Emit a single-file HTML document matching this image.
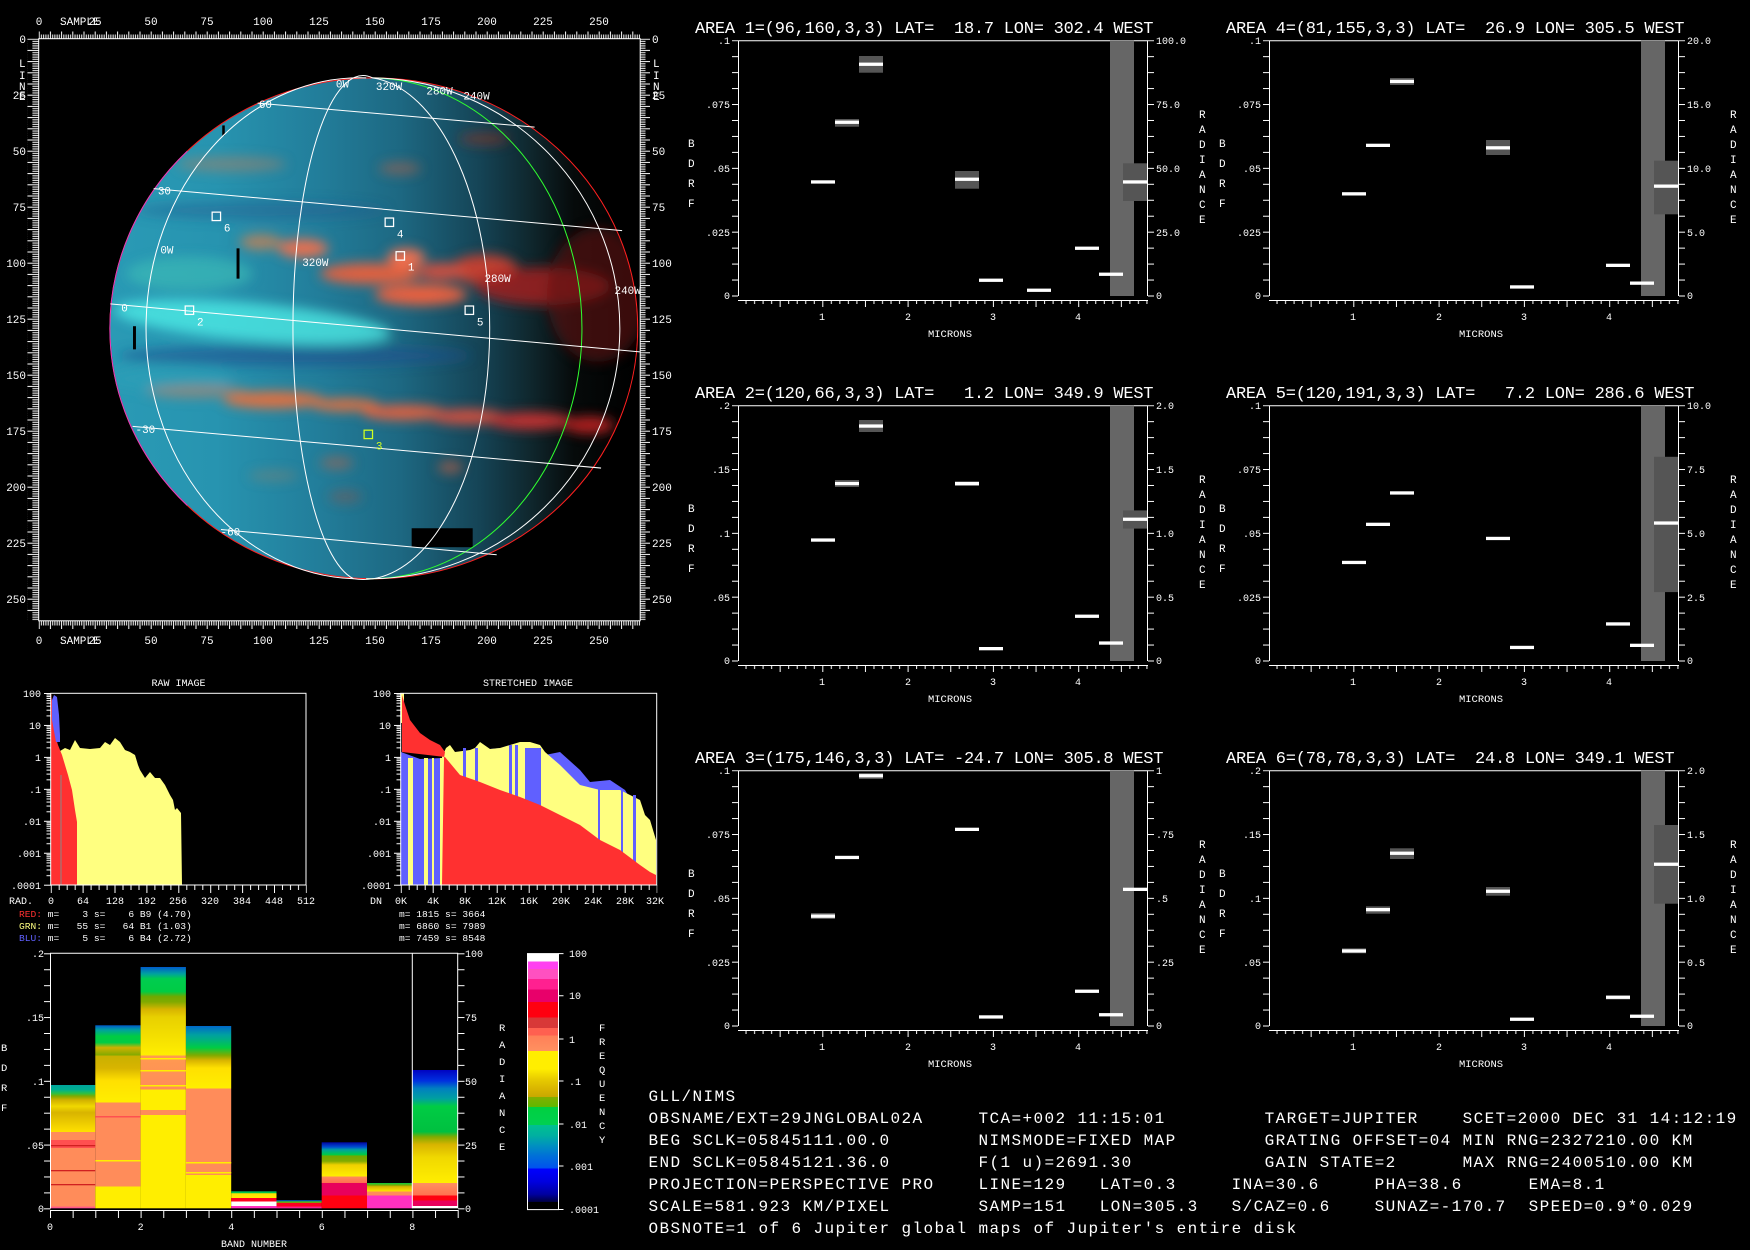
<!DOCTYPE html>
<html><head><meta charset="utf-8"><style>
html,body{margin:0;padding:0;background:#000;}
svg{display:block}
text{font-family:"Liberation Mono",monospace;fill:#fff;white-space:pre}
</style></head><body>
<svg width="1750" height="1250" viewBox="0 0 1750 1250" xmlns="http://www.w3.org/2000/svg">
<defs>
<pattern id="rt" x="38.7" y="31.5" width="11.2" height="7.2" patternUnits="userSpaceOnUse"><rect x="0" y="0" width="1" height="7.2" fill="#fff"/><rect x="2.24" y="3" width="1" height="4.2" fill="#fff"/><rect x="4.48" y="3" width="1" height="4.2" fill="#fff"/><rect x="6.72" y="3" width="1" height="4.2" fill="#fff"/><rect x="8.96" y="3" width="1" height="4.2" fill="#fff"/></pattern>
<pattern id="rb" x="38.7" y="621" width="11.2" height="8" patternUnits="userSpaceOnUse"><rect x="0" y="0" width="1" height="8" fill="#fff"/><rect x="2.24" y="0" width="1" height="4.5" fill="#fff"/><rect x="4.48" y="0" width="1" height="4.5" fill="#fff"/><rect x="6.72" y="0" width="1" height="4.5" fill="#fff"/><rect x="8.96" y="0" width="1" height="4.5" fill="#fff"/></pattern>
<pattern id="rl" x="27.4" y="38.7" width="11.3" height="11.2" patternUnits="userSpaceOnUse"><rect x="0" y="0" width="11.3" height="1" fill="#fff"/><rect x="5" y="2.24" width="6.3" height="1" fill="#fff"/><rect x="5" y="4.48" width="6.3" height="1" fill="#fff"/><rect x="5" y="6.72" width="6.3" height="1" fill="#fff"/><rect x="5" y="8.96" width="6.3" height="1" fill="#fff"/></pattern>
<pattern id="rr" x="640" y="38.7" width="10" height="11.2" patternUnits="userSpaceOnUse"><rect x="0" y="0" width="10" height="1" fill="#fff"/><rect x="0" y="2.24" width="5.5" height="1" fill="#fff"/><rect x="0" y="4.48" width="5.5" height="1" fill="#fff"/><rect x="0" y="6.72" width="5.5" height="1" fill="#fff"/><rect x="0" y="8.96" width="5.5" height="1" fill="#fff"/></pattern>
<pattern id="tl" x="0" y="40.2" width="6" height="15.956" patternUnits="userSpaceOnUse"><rect x="0" y="0" width="6" height="1" fill="#fff"/></pattern>
<pattern id="tb" x="737" y="300" width="42.65" height="7" patternUnits="userSpaceOnUse"><rect x="0" y="0" width="1" height="7" fill="#fff"/><rect x="8.53" y="0" width="1" height="4" fill="#fff"/><rect x="17.06" y="0" width="1" height="4" fill="#fff"/><rect x="25.59" y="0" width="1" height="4" fill="#fff"/><rect x="34.12" y="0" width="1" height="4" fill="#fff"/></pattern>
<pattern id="hl" x="44" y="693" width="7" height="31.95" patternUnits="userSpaceOnUse"><rect x="0" y="0" width="7" height="1" fill="#fff"/><rect x="2.5" y="1.46" width="4.5" height="1" fill="#fff"/><rect x="2.5" y="3.1" width="4.5" height="1" fill="#fff"/><rect x="2.5" y="4.96" width="4.5" height="1" fill="#fff"/><rect x="2.5" y="7.1" width="4.5" height="1" fill="#fff"/><rect x="2.5" y="9.63" width="4.5" height="1" fill="#fff"/><rect x="2.5" y="12.7" width="4.5" height="1" fill="#fff"/><rect x="2.5" y="16.7" width="4.5" height="1" fill="#fff"/><rect x="2.5" y="22.4" width="4.5" height="1" fill="#fff"/></pattern>
<pattern id="hb" x="50.7" y="885" width="31.9" height="8" patternUnits="userSpaceOnUse"><rect x="0" y="0" width="1" height="8" fill="#fff"/><rect x="8" y="0" width="1" height="5" fill="#fff"/><rect x="16" y="0" width="1" height="5" fill="#fff"/><rect x="24" y="0" width="1" height="5" fill="#fff"/></pattern>
<pattern id="hb2" x="400.7" y="885" width="32" height="8" patternUnits="userSpaceOnUse"><rect x="0" y="0" width="1" height="8" fill="#fff"/><rect x="8" y="0" width="1" height="5" fill="#fff"/><rect x="16" y="0" width="1" height="5" fill="#fff"/><rect x="24" y="0" width="1" height="5" fill="#fff"/></pattern>
<pattern id="bl" x="0" y="953.3" width="7" height="15.94" patternUnits="userSpaceOnUse"><rect x="0" y="0" width="7" height="1" fill="#fff"/></pattern>
<pattern id="bb" x="50" y="1210" width="22.65" height="8" patternUnits="userSpaceOnUse"><rect x="0" y="0" width="1" height="8" fill="#fff"/></pattern>

<linearGradient id="pg" gradientUnits="userSpaceOnUse" x1="262" y1="0" x2="1515" y2="0">
<stop offset="0" stop-color="#2a9ab5"/><stop offset=".2" stop-color="#2794b0"/><stop offset=".4" stop-color="#227d9a"/><stop offset=".55" stop-color="#1d6882"/><stop offset=".7" stop-color="#154456"/><stop offset=".8" stop-color="#0f262c"/><stop offset=".88" stop-color="#060a0a"/><stop offset="1" stop-color="#000"/>
</linearGradient>
<clipPath id="pc"><ellipse cx="888" cy="780" rx="626" ry="595"/></clipPath>
<filter id="bl15" x="-50%" y="-50%" width="200%" height="200%"><feGaussianBlur stdDeviation="14"/></filter>

<linearGradient id="g0" gradientUnits="userSpaceOnUse" x1="0" y1="1208.3" x2="0" y2="953.3">
<stop offset="0" stop-color="#ff40a0"/><stop offset=".01" stop-color="#ff8c5a"/><stop offset=".3" stop-color="#ff8c5a"/><stop offset=".3" stop-color="#ffe000"/><stop offset=".375" stop-color="#d8b400"/><stop offset=".4" stop-color="#f0d800"/><stop offset=".425" stop-color="#d0b000"/><stop offset=".44" stop-color="#80aa00"/><stop offset=".45" stop-color="#30c040"/><stop offset=".465" stop-color="#00b090"/><stop offset=".49" stop-color="#00a0a0"/></linearGradient>
<linearGradient id="g1" gradientUnits="userSpaceOnUse" x1="0" y1="1208.3" x2="0" y2="953.3">
<stop offset="0" stop-color="#ffee00"/><stop offset=".085" stop-color="#ffee00"/><stop offset=".085" stop-color="#ff8c5a"/><stop offset=".415" stop-color="#ff8c5a"/><stop offset=".415" stop-color="#ffee00"/><stop offset=".5" stop-color="#ffe000"/><stop offset=".55" stop-color="#d8b400"/><stop offset=".6" stop-color="#c8b000"/><stop offset=".6" stop-color="#80aa00"/><stop offset=".63" stop-color="#d0b000"/><stop offset=".65" stop-color="#00cc44"/><stop offset=".675" stop-color="#00cc44"/><stop offset=".7" stop-color="#00a0a0"/><stop offset=".72" stop-color="#0050d0"/></linearGradient>
<linearGradient id="g2" gradientUnits="userSpaceOnUse" x1="0" y1="1208.3" x2="0" y2="953.3">
<stop offset="0" stop-color="#ffee00"/><stop offset=".365" stop-color="#ffee00"/><stop offset=".365" stop-color="#ff8c5a"/><stop offset=".385" stop-color="#ff8c5a"/><stop offset=".385" stop-color="#ffee00"/><stop offset=".465" stop-color="#ffee00"/><stop offset=".465" stop-color="#ff8c5a"/><stop offset=".6" stop-color="#ff9a50"/><stop offset=".6" stop-color="#ffee00"/><stop offset=".75" stop-color="#e8d000"/><stop offset=".78" stop-color="#d8b400"/><stop offset=".81" stop-color="#80aa00"/><stop offset=".83" stop-color="#70a800"/><stop offset=".85" stop-color="#00cc44"/><stop offset=".9" stop-color="#00cc50"/><stop offset=".92" stop-color="#00a0a0"/><stop offset=".95" stop-color="#0050d0"/></linearGradient>
<linearGradient id="g3" gradientUnits="userSpaceOnUse" x1="0" y1="1208.3" x2="0" y2="953.3">
<stop offset="0" stop-color="#ffee00"/><stop offset=".13" stop-color="#ffee00"/><stop offset=".13" stop-color="#ff8c5a"/><stop offset=".47" stop-color="#ff8c5a"/><stop offset=".47" stop-color="#ffee00"/><stop offset=".55" stop-color="#ffe000"/><stop offset=".58" stop-color="#d8b400"/><stop offset=".6" stop-color="#80aa00"/><stop offset=".63" stop-color="#00cc44"/><stop offset=".66" stop-color="#00b080"/><stop offset=".68" stop-color="#00a0a0"/><stop offset=".72" stop-color="#0060d0"/></linearGradient>
<linearGradient id="g4" gradientUnits="userSpaceOnUse" x1="0" y1="1208.3" x2="0" y2="953.3">
<stop offset="0" stop-color="#ff30c0"/><stop offset=".01" stop-color="#ff30c0"/><stop offset=".01" stop-color="#ffffff"/><stop offset=".027" stop-color="#ffffff"/><stop offset=".027" stop-color="#ff0020"/><stop offset=".04" stop-color="#ff0020"/><stop offset=".04" stop-color="#ffee00"/><stop offset=".058" stop-color="#ffe000"/><stop offset=".06" stop-color="#00cc44"/><stop offset=".075" stop-color="#00a080"/></linearGradient>
<linearGradient id="g5" gradientUnits="userSpaceOnUse" x1="0" y1="1208.3" x2="0" y2="953.3">
<stop offset="0" stop-color="#ff30c0"/><stop offset=".01" stop-color="#ff0020"/><stop offset=".02" stop-color="#ff0020"/><stop offset=".022" stop-color="#80aa00"/><stop offset=".03" stop-color="#00a080"/><stop offset=".03" stop-color="#0000c0"/><stop offset=".04" stop-color="#0000a0"/></linearGradient>
<linearGradient id="g6" gradientUnits="userSpaceOnUse" x1="0" y1="1208.3" x2="0" y2="953.3">
<stop offset="0" stop-color="#ff0010"/><stop offset=".05" stop-color="#ff0010"/><stop offset=".05" stop-color="#e8005c"/><stop offset=".1" stop-color="#e8005c"/><stop offset=".1" stop-color="#ff7050"/><stop offset=".125" stop-color="#ff8c5a"/><stop offset=".125" stop-color="#ffee00"/><stop offset=".17" stop-color="#f0d000"/><stop offset=".185" stop-color="#80aa00"/><stop offset=".205" stop-color="#70a800"/><stop offset=".21" stop-color="#00cc44"/><stop offset=".23" stop-color="#00a0a0"/><stop offset=".24" stop-color="#0050d0"/><stop offset=".26" stop-color="#0000a0"/></linearGradient>
<linearGradient id="g7" gradientUnits="userSpaceOnUse" x1="0" y1="1208.3" x2="0" y2="953.3">
<stop offset="0" stop-color="#ff30c0"/><stop offset=".05" stop-color="#ff30c0"/><stop offset=".05" stop-color="#ff8c5a"/><stop offset=".065" stop-color="#ff8c5a"/><stop offset=".065" stop-color="#ffee00"/><stop offset=".085" stop-color="#d8b400"/><stop offset=".09" stop-color="#80aa00"/><stop offset=".1" stop-color="#00cc44"/></linearGradient>
<linearGradient id="g8" gradientUnits="userSpaceOnUse" x1="0" y1="1208.3" x2="0" y2="953.3">
<stop offset="0" stop-color="#ffffff"/><stop offset=".01" stop-color="#ffffff"/><stop offset=".01" stop-color="#e8005c"/><stop offset=".03" stop-color="#e8005c"/><stop offset=".03" stop-color="#ff0010"/><stop offset=".05" stop-color="#ff0010"/><stop offset=".05" stop-color="#ff7050"/><stop offset=".1" stop-color="#ff9060"/><stop offset=".1" stop-color="#ffee00"/><stop offset=".2" stop-color="#f0d800"/><stop offset=".25" stop-color="#d8b400"/><stop offset=".28" stop-color="#80aa00"/><stop offset=".3" stop-color="#00c040"/><stop offset=".4" stop-color="#00cc44"/><stop offset=".43" stop-color="#00a0a0"/><stop offset=".47" stop-color="#0080c0"/><stop offset=".5" stop-color="#0030e0"/><stop offset=".545" stop-color="#0000c0"/></linearGradient>
<linearGradient id="cb" x1="0" y1="0" x2="0" y2="1">
<stop offset="0" stop-color="#fff"/><stop offset=".03" stop-color="#fff"/><stop offset=".03" stop-color="#ff40f0"/><stop offset=".06" stop-color="#ff40f0"/><stop offset=".06" stop-color="#ff50c0"/><stop offset=".1" stop-color="#ff50c0"/><stop offset=".1" stop-color="#ff2090"/><stop offset=".14" stop-color="#ff2090"/><stop offset=".14" stop-color="#e8006a"/><stop offset=".19" stop-color="#e8006a"/><stop offset=".19" stop-color="#ff0010"/><stop offset=".25" stop-color="#ff0010"/><stop offset=".25" stop-color="#d83838"/><stop offset=".29" stop-color="#d83838"/><stop offset=".29" stop-color="#ff6050"/><stop offset=".32" stop-color="#ff6050"/><stop offset=".32" stop-color="#ff8058"/><stop offset=".38" stop-color="#ff9060"/><stop offset=".38" stop-color="#ffee00"/><stop offset=".45" stop-color="#ffee00"/><stop offset=".49" stop-color="#e8cc00"/><stop offset=".53" stop-color="#d8b400"/><stop offset=".56" stop-color="#c8a800"/><stop offset=".56" stop-color="#80b000"/><stop offset=".6" stop-color="#60b800"/><stop offset=".6" stop-color="#00d040"/><stop offset=".67" stop-color="#00d050"/><stop offset=".67" stop-color="#00c090"/><stop offset=".71" stop-color="#00b0a0"/><stop offset=".75" stop-color="#0090c0"/><stop offset=".79" stop-color="#0070d8"/><stop offset=".84" stop-color="#0050f0"/><stop offset=".84" stop-color="#0000ff"/><stop offset=".89" stop-color="#0000e0"/><stop offset=".94" stop-color="#0000a0"/><stop offset=".97" stop-color="#000040"/><stop offset=".97" stop-color="#000"/><stop offset="1" stop-color="#000"/></linearGradient>

<g id="cf">
<path d="M738.5 296 V40.7 H1147.5 V296" stroke="#fff" fill="none"/>
<path d="M738 300.5 H1148" stroke="#fff"/>
<rect x="732" y="40.2" width="6" height="257" fill="url(#tl)"/>
<rect x="1148" y="40.2" width="6" height="257" fill="url(#tl)"/>
<rect x="745" y="300" width="403.5" height="7" fill="url(#tb)"/>
<rect x="1110" y="40.7" width="24" height="255.3" fill="#666"/>
<text x="688" y="147" font-size="11">B</text><text x="688" y="167" font-size="11">D</text><text x="688" y="187" font-size="11">R</text><text x="688" y="207" font-size="11">F</text>
<text x="1199" y="118" font-size="11">R</text><text x="1199" y="133" font-size="11">A</text><text x="1199" y="148" font-size="11">D</text><text x="1199" y="163" font-size="11">I</text><text x="1199" y="178" font-size="11">A</text><text x="1199" y="193" font-size="11">N</text><text x="1199" y="208" font-size="11">C</text><text x="1199" y="223" font-size="11">E</text>
<text x="822" y="320" font-size="10" text-anchor="middle">1</text><text x="908" y="320" font-size="10" text-anchor="middle">2</text><text x="993" y="320" font-size="10" text-anchor="middle">3</text><text x="1078" y="320" font-size="10" text-anchor="middle">4</text>
<text x="950" y="337" font-size="10.5" text-anchor="middle">MICRONS</text>
</g>
</defs>

<!-- ===== Planet panel ===== -->
<rect x="38.7" y="31.5" width="601.5" height="7.2" fill="url(#rt)"/>
<rect x="38.7" y="621" width="601.5" height="8" fill="url(#rb)"/>
<rect x="27.4" y="38.7" width="11.3" height="582" fill="url(#rl)"/>
<rect x="640" y="38.7" width="10" height="582" fill="url(#rr)"/>
<rect x="38.7" y="38.7" width="601.5" height="582.1" fill="none" stroke="#fff"/>
<g font-size="11" text-anchor="middle">
<text x="39" y="25">0</text><text x="95" y="25">25</text><text x="151" y="25">50</text><text x="207" y="25">75</text><text x="263" y="25">100</text><text x="319" y="25">125</text><text x="375" y="25">150</text><text x="431" y="25">175</text><text x="487" y="25">200</text><text x="543" y="25">225</text><text x="599" y="25">250</text>
<text x="39" y="644">0</text><text x="95" y="644">25</text><text x="151" y="644">50</text><text x="207" y="644">75</text><text x="263" y="644">100</text><text x="319" y="644">125</text><text x="375" y="644">150</text><text x="431" y="644">175</text><text x="487" y="644">200</text><text x="543" y="644">225</text><text x="599" y="644">250</text>
</g>
<text x="60" y="25" font-size="11">SAMPLE</text><text x="60" y="644" font-size="11">SAMPLE</text>
<g font-size="11" text-anchor="end">
<text x="26" y="43">0</text><text x="26" y="99">25</text><text x="26" y="155">50</text><text x="26" y="211">75</text><text x="26" y="267">100</text><text x="26" y="323">125</text><text x="26" y="379">150</text><text x="26" y="435">175</text><text x="26" y="491">200</text><text x="26" y="547">225</text><text x="26" y="603">250</text>
</g>
<g font-size="11">
<text x="19" y="67">L</text><text x="19" y="79">I</text><text x="19" y="90">N</text><text x="19" y="100">E</text>
<text x="653" y="67">L</text><text x="653" y="79">I</text><text x="653" y="90">N</text><text x="653" y="100">E</text>
<text x="652" y="43">0</text><text x="652" y="99">25</text><text x="652" y="155">50</text><text x="652" y="211">75</text><text x="652" y="267">100</text><text x="652" y="323">125</text><text x="652" y="379">150</text><text x="652" y="435">175</text><text x="652" y="491">200</text><text x="652" y="547">225</text><text x="652" y="603">250</text>
</g>

<svg x="0" y="0" width="660" height="660" viewBox="0 0 1568 1568">
<ellipse cx="888" cy="780" rx="626" ry="595" fill="url(#pg)"/>
<g clip-path="url(#pc)"><g filter="url(#bl15)">
<ellipse cx="600" cy="765" rx="330" ry="45" fill="#50f0e8" opacity=".75" transform="rotate(5 600 765)"/>
<ellipse cx="450" cy="650" rx="150" ry="40" fill="#40c8b8" opacity=".5"/>
<ellipse cx="700" cy="845" rx="420" ry="25" fill="#1a4f90" opacity=".6"/>
<ellipse cx="620" cy="500" rx="300" ry="22" fill="#1f5a90" opacity=".45"/>
<ellipse cx="400" cy="900" rx="150" ry="30" fill="#2ca0b8" opacity=".6"/>
<ellipse cx="720" cy="590" rx="60" ry="22" fill="#e87050"/>
<ellipse cx="620" cy="575" rx="50" ry="18" fill="#d08050" opacity=".8"/>
<ellipse cx="880" cy="650" rx="120" ry="25" fill="#e06040"/>
<ellipse cx="1000" cy="700" rx="110" ry="25" fill="#e86040"/>
<ellipse cx="965" cy="612" rx="45" ry="22" fill="#f07050"/>
<ellipse cx="1150" cy="640" rx="80" ry="35" fill="#c04030"/>
<ellipse cx="1290" cy="680" rx="160" ry="45" fill="#a02020" opacity=".85"/>
<ellipse cx="1050" cy="645" rx="60" ry="20" fill="#d05040"/>
<ellipse cx="470" cy="930" rx="120" ry="15" fill="#c08060" opacity=".6"/>
<ellipse cx="650" cy="950" rx="120" ry="20" fill="#e07040"/>
<ellipse cx="820" cy="962" rx="80" ry="15" fill="#e07040"/>
<ellipse cx="960" cy="980" rx="100" ry="18" fill="#e06040"/>
<ellipse cx="1110" cy="990" rx="90" ry="18" fill="#d05040"/>
<ellipse cx="1260" cy="1000" rx="100" ry="20" fill="#c03030"/>
<ellipse cx="1400" cy="1010" rx="60" ry="20" fill="#b02020"/>
<ellipse cx="550" cy="390" rx="130" ry="18" fill="#b08060" opacity=".5"/>
<ellipse cx="950" cy="400" rx="50" ry="15" fill="#c06040" opacity=".5"/>
<ellipse cx="1150" cy="330" rx="60" ry="15" fill="#a03020" opacity=".5"/>
<ellipse cx="800" cy="1100" rx="40" ry="15" fill="#c06040" opacity=".5"/>
<ellipse cx="1070" cy="1110" rx="30" ry="15" fill="#d06040" opacity=".6"/>
<ellipse cx="650" cy="1130" rx="60" ry="12" fill="#a08060" opacity=".4"/>
<ellipse cx="820" cy="1180" rx="40" ry="15" fill="#a05040" opacity=".4"/>
<ellipse cx="1420" cy="700" rx="120" ry="160" fill="#601010" opacity=".6"/>
</g></g>
<rect x="562" y="590" width="7" height="72" fill="#000"/>
<rect x="316" y="775" width="7" height="55" fill="#000"/>
<rect x="528" y="298" width="6" height="24" fill="#000"/>
<rect x="978" y="1255" width="145" height="45" fill="#000"/>
<g fill="none" stroke-width="2.4">
<ellipse cx="888" cy="780" rx="627" ry="595" stroke="#ff2020"/>
<path d="M445 1201 A627 595 0 0 1 445 359" stroke="#e040c0"/>
<path d="M885 185 A505 595 0 0 1 870 1375" stroke="#30ff30"/>
<path d="M885 185 A595 595 0 0 1 870 1375" stroke="#fff"/>
<path d="M885 185 A300 595 0 0 1 840 1375" stroke="#fff"/>
<path d="M885 185 A165 595 0 0 0 840 1375" stroke="#fff"/>
<path d="M870 185 A508 595 0 0 0 840 1375" stroke="#fff"/>
<path d="M612 245 L1270 302" stroke="#fff"/>
<path d="M365 448 L1478 548" stroke="#fff"/>
<path d="M262 722 L1520 836" stroke="#fff"/>
<path d="M315 1013 L1428 1112" stroke="#fff"/>
<path d="M525 1258 L1180 1318" stroke="#fff"/>
<rect x="504" y="504" width="20" height="20" stroke="#fff" stroke-width="3"/>
<rect x="915" y="518" width="20" height="20" stroke="#fff" stroke-width="3"/>
<rect x="941" y="598" width="20" height="20" stroke="#fff" stroke-width="3"/>
<rect x="440" y="727" width="20" height="20" stroke="#fff" stroke-width="3"/>
<rect x="1105" y="727" width="20" height="20" stroke="#fff" stroke-width="3"/>
<rect x="865" y="1022" width="20" height="20" stroke="#d0ff20" stroke-width="3"/>
</g>
<g font-size="26">
<text x="532" y="550">6</text><text x="943" y="564">4</text><text x="969" y="643">1</text><text x="468" y="773">2</text><text x="1133" y="773">5</text><text x="893" y="1068" style="fill:#d0ff20">3</text>
<text x="798" y="208">0W</text><text x="893" y="214">320W</text><text x="1013" y="224">280W</text><text x="1101" y="236">240W</text>
<text x="615" y="257">60</text><text x="375" y="462">30</text><text x="381" y="602">0W</text><text x="718" y="632">320W</text><text x="1151" y="670">280W</text><text x="1460" y="699">240W</text>
<text x="288" y="740">0</text><text x="322" y="1029">-30</text><text x="524" y="1272">-60</text>
</g>
</svg>

<!-- ===== Raw histogram ===== -->
<text x="178.5" y="686" font-size="10" text-anchor="middle">RAW IMAGE</text>
<text x="528" y="686" font-size="10" text-anchor="middle">STRETCHED IMAGE</text>
<polygon fill="#ffff80" points="51,885 51,693 53,720 55,745 60,751 65,748 70,750 75,740 80,748 90,749 100,748 105,742 110,745 115,738 120,742 125,750 130,752 135,755 138,765 140,770 145,778 150,772 155,778 160,778 165,785 170,795 173,800 175,810 177,808 181,813 182,885"/>
<polygon fill="#ff3030" points="51,885 51,693 53,710 55,735 58,745 62,755 65,765 68,775 72,790 75,810 77,822 77,885"/>
<polygon fill="#6060ff" points="52,700 54,695 57,697 59,715 60,735 60,742 56,742 52,720"/>
<rect x="60.5" y="775" width="1" height="110" fill="#888"/>
<rect x="50.7" y="693.3" width="255.3" height="191.7" fill="none" stroke="#fff"/>
<rect x="44" y="693" width="7" height="193" fill="url(#hl)"/>
<rect x="50.7" y="885" width="256" height="8" fill="url(#hb)"/>
<g font-size="10" text-anchor="end">
<text x="41" y="697">100</text><text x="41" y="729">10</text><text x="41" y="761">1</text><text x="41" y="793">.1</text><text x="41" y="825">.01</text><text x="41" y="857">.001</text><text x="41" y="889">.0001</text>
<text x="391" y="697">100</text><text x="391" y="729">10</text><text x="391" y="761">1</text><text x="391" y="793">.1</text><text x="391" y="825">.01</text><text x="391" y="857">.001</text><text x="391" y="889">.0001</text>
</g>
<text x="9" y="904" font-size="10">RAD.</text>
<g font-size="10" text-anchor="middle">
<text x="51" y="904">0</text><text x="83" y="904">64</text><text x="115" y="904">128</text><text x="147" y="904">192</text><text x="178" y="904">256</text><text x="210" y="904">320</text><text x="242" y="904">384</text><text x="274" y="904">448</text><text x="306" y="904">512</text>
<text x="401" y="904">0K</text><text x="433" y="904">4K</text><text x="465" y="904">8K</text><text x="497" y="904">12K</text><text x="529" y="904">16K</text><text x="561" y="904">20K</text><text x="593" y="904">24K</text><text x="625" y="904">28K</text><text x="655" y="904">32K</text>
</g>
<text x="370" y="904" font-size="10">DN</text>
<g font-size="9.6">
<text x="19" y="917"><tspan style="fill:#ff3030">RED:</tspan> m=    3 s=    6 B9 (4.70)</text>
<text x="19" y="929"><tspan style="fill:#ffff80">GRN:</tspan> m=   55 s=   64 B1 (1.03)</text>
<text x="19" y="941"><tspan style="fill:#6060ff">BLU:</tspan> m=    5 s=    6 B4 (2.72)</text>
<text x="399" y="917">m= 1815 s= 3664</text>
<text x="399" y="929">m= 6860 s= 7989</text>
<text x="399" y="941">m= 7459 s= 8548</text>
</g>

<!-- ===== Stretched histogram ===== -->
<polygon fill="#6060ff" points="401,885 401,752 420,759 442,758 445,755 480,750 500,748 530,750 545,755 560,752 580,770 590,782 610,780 625,790 640,815 650,830 656,850 656,885"/>
<polygon fill="#ffff80" points="442,885 442,757 446,748 450,745 455,752 470,750 475,748 480,742 490,749 500,748 510,745 520,742 530,742 540,745 545,752 560,765 580,785 600,790 620,790 640,800 645,815 650,820 656,840 656,885"/>
<g fill="#6060ff"><rect x="463" y="748" width="3" height="137"/><rect x="475" y="748" width="3" height="137"/><rect x="509" y="745" width="3" height="140"/><rect x="515" y="745" width="3" height="140"/><rect x="525" y="748" width="16" height="137"/><rect x="598" y="785" width="2" height="100"/><rect x="621" y="790" width="2" height="95"/><rect x="633" y="795" width="3" height="90"/></g>
<g fill="#ffff80"><rect x="408" y="758" width="5" height="127"/><rect x="424" y="758" width="4" height="127"/><rect x="432" y="758" width="2" height="127"/><rect x="440" y="758" width="2" height="127"/><rect x="401" y="693" width="3" height="30"/></g>
<polygon fill="#ff3030" points="402,752 402,695 405,705 410,720 420,733 430,740 440,745 445,752 444,758 442,885 656,885 656,875 650,872 640,865 620,850 600,840 580,825 560,815 540,805 520,797 500,790 480,782 460,775 445,757"/>
<rect x="400.7" y="693.3" width="256" height="191.7" fill="none" stroke="#fff"/>
<g transform="translate(350 0)"><rect x="44" y="693" width="7" height="193" fill="url(#hl)"/></g>
<rect x="400.7" y="885" width="256.5" height="8" fill="url(#hb2)"/>

<!-- ===== Band chart ===== -->
<rect x="50" y="1085" width="45.3" height="123.3" fill="url(#g0)"/>
<rect x="95.3" y="1025.3" width="45.3" height="183" fill="url(#g1)"/>
<rect x="140.6" y="967" width="45.3" height="241.3" fill="url(#g2)"/>
<rect x="185.9" y="1026" width="45.3" height="182.3" fill="url(#g3)"/>
<rect x="231.2" y="1191.3" width="45.3" height="17" fill="url(#g4)"/>
<rect x="276.5" y="1200" width="45.3" height="8.3" fill="url(#g5)"/>
<rect x="321.7" y="1142.3" width="45.3" height="66" fill="url(#g6)"/>
<rect x="367" y="1183" width="45.3" height="25.3" fill="url(#g7)"/>
<rect x="412.3" y="1070" width="45.3" height="138.3" fill="url(#g8)"/>
<g fill="#d02020"><rect x="50" y="1140" width="45.3" height="8" fill="#ff5050"/><rect x="50" y="1145" width="45.3" height="1.3"/><rect x="50" y="1170" width="45.3" height="1.3"/><rect x="50" y="1184" width="45.3" height="1.3"/><rect x="95.3" y="1116" width="45.3" height="1.5" fill="#ff5050"/><rect x="95.3" y="1160" width="45.3" height="1.5" fill="#ffee00"/><rect x="140.6" y="1058" width="45.3" height="1.5" fill="#ffee00"/><rect x="140.6" y="1070" width="45.3" height="1.5" fill="#ffee00"/><rect x="140.6" y="1085" width="45.3" height="1.5" fill="#ffee00"/><rect x="185.9" y="1162" width="45.3" height="1.5" fill="#ffee00"/><rect x="185.9" y="1172" width="45.3" height="1.5" fill="#ffee00"/></g>
<path d="M50.5 1208.3 V953.3 H457.7 V1208.3 M412.3 953.3 V1208.3 M50 1210.5 H458" stroke="#fff" fill="none"/>
<rect x="44" y="953" width="6.5" height="257" fill="url(#bl)"/>
<rect x="458" y="953" width="6.5" height="257" fill="url(#bl)"/>
<rect x="50" y="1210" width="410" height="8" fill="url(#bb)"/>
<g font-size="10" text-anchor="end">
<text x="44" y="957">.2</text><text x="44" y="1021">.15</text><text x="44" y="1085">.1</text><text x="44" y="1149">.05</text><text x="44" y="1212">0</text>
</g>
<g font-size="10">
<text x="465" y="957">100</text><text x="465" y="1021">75</text><text x="465" y="1085">50</text><text x="465" y="1149">25</text><text x="465" y="1212">0</text>
</g>
<g font-size="10" text-anchor="middle">
<text x="50" y="1230">0</text><text x="140.6" y="1230">2</text><text x="231.2" y="1230">4</text><text x="321.7" y="1230">6</text><text x="412.3" y="1230">8</text>
<text x="254" y="1247">BAND NUMBER</text>
</g>
<g font-size="10.5">
<text x="1" y="1051">B</text><text x="1" y="1071">D</text><text x="1" y="1091">R</text><text x="1" y="1111">F</text>
<text x="499" y="1031">R</text><text x="499" y="1048">A</text><text x="499" y="1065">D</text><text x="499" y="1082">I</text><text x="499" y="1099">A</text><text x="499" y="1116">N</text><text x="499" y="1133">C</text><text x="499" y="1150">E</text>
<text x="599" y="1031">F</text><text x="599" y="1045">R</text><text x="599" y="1059">E</text><text x="599" y="1073">Q</text><text x="599" y="1087">U</text><text x="599" y="1101">E</text><text x="599" y="1115">N</text><text x="599" y="1129">C</text><text x="599" y="1143">Y</text>
</g>
<rect x="527.5" y="953.6" width="31" height="256" fill="url(#cb)" stroke="#fff"/>
<path d="M558.5 953.6 h5 M558.5 995.7 h5 M558.5 1039 h5 M558.5 1081 h5 M558.5 1124 h5 M558.5 1166 h5 M558.5 1209.5 h5" stroke="#fff"/>
<g font-size="10">
<text x="569" y="957">100</text><text x="569" y="999">10</text><text x="569" y="1043">1</text><text x="569" y="1085">.1</text><text x="569" y="1128">.01</text><text x="569" y="1170">.001</text><text x="569" y="1213">.0001</text>
</g>

<!-- ===== Spectrum charts ===== -->
<g>
<use href="#cf"/>
<text x="695" y="33" font-size="17" letter-spacing="-0.24">AREA 1=(96,160,3,3) LAT=  18.7 LON= 302.4 WEST</text>
<g font-size="10" text-anchor="end"><text x="730" y="44">.1</text><text x="730" y="108">.075</text><text x="730" y="172">.05</text><text x="730" y="236">.025</text><text x="730" y="299">0</text></g>
<g font-size="10"><text x="1156" y="44">100.0</text><text x="1156" y="108">75.0</text><text x="1156" y="172">50.0</text><text x="1156" y="236">25.0</text><text x="1156" y="299">0</text></g>
<g fill="#555"><rect x="835" y="119" width="24" height="7.7"/><rect x="859" y="56" width="24" height="16.7"/><rect x="955" y="171" width="24" height="17.7"/><rect x="1123" y="163.3" width="24" height="37.7"/></g>
<g fill="#fff"><rect x="811" y="180.3" width="24" height="3.3"/><rect x="835" y="120.6" width="24" height="3.3"/><rect x="859" y="62.6" width="24" height="3.3"/><rect x="955" y="177.6" width="24" height="3.3"/><rect x="979" y="278.6" width="24" height="3.3"/><rect x="1027" y="288.6" width="24" height="3.3"/><rect x="1075" y="246.6" width="24" height="3.3"/><rect x="1099" y="272.6" width="24" height="3.3"/><rect x="1123" y="180.3" width="24" height="3.3"/></g>
</g>
<g transform="translate(531 0)">
<use href="#cf"/>
<text x="695" y="33" font-size="17" letter-spacing="-0.24">AREA 4=(81,155,3,3) LAT=  26.9 LON= 305.5 WEST</text>
<g font-size="10" text-anchor="end"><text x="730" y="44">.1</text><text x="730" y="108">.075</text><text x="730" y="172">.05</text><text x="730" y="236">.025</text><text x="730" y="299">0</text></g>
<g font-size="10"><text x="1156" y="44">20.0</text><text x="1156" y="108">15.0</text><text x="1156" y="172">10.0</text><text x="1156" y="236">5.0</text><text x="1156" y="299">0</text></g>
<g fill="#555"><rect x="859" y="78" width="24" height="7"/><rect x="955" y="140" width="24" height="15"/><rect x="1123" y="160.7" width="24" height="53.6"/></g>
<g fill="#fff"><rect x="811" y="192.2" width="24" height="3.3"/><rect x="835" y="143.7" width="24" height="3.3"/><rect x="859" y="79.8" width="24" height="3.3"/><rect x="955" y="146.2" width="24" height="3.3"/><rect x="979" y="285.3" width="24" height="3.3"/><rect x="1075" y="263.7" width="24" height="3.3"/><rect x="1099" y="281.5" width="24" height="3.3"/><rect x="1123" y="184.5" width="24" height="3.3"/></g>
</g>
<g transform="translate(0 365)">
<use href="#cf"/>
<text x="695" y="33" font-size="17" letter-spacing="-0.24">AREA 2=(120,66,3,3) LAT=   1.2 LON= 349.9 WEST</text>
<g font-size="10" text-anchor="end"><text x="730" y="44">.2</text><text x="730" y="108">.15</text><text x="730" y="172">.1</text><text x="730" y="236">.05</text><text x="730" y="299">0</text></g>
<g font-size="10"><text x="1156" y="44">2.0</text><text x="1156" y="108">1.5</text><text x="1156" y="172">1.0</text><text x="1156" y="236">0.5</text><text x="1156" y="299">0</text></g>
<g fill="#555"><rect x="835" y="115" width="24" height="7"/><rect x="859" y="55" width="24" height="12"/><rect x="955" y="116.5" width="24" height="4.5"/><rect x="1123" y="145.4" width="24" height="18.2"/></g>
<g fill="#fff"><rect x="811" y="173.4" width="24" height="3.3"/><rect x="835" y="116.9" width="24" height="3.3"/><rect x="859" y="59.4" width="24" height="3.3"/><rect x="955" y="116.9" width="24" height="3.3"/><rect x="979" y="282" width="24" height="3.3"/><rect x="1075" y="249.6" width="24" height="3.3"/><rect x="1099" y="276.4" width="24" height="3.3"/><rect x="1123" y="152.6" width="24" height="3.3"/></g>
</g>
<g transform="translate(531 365)">
<use href="#cf"/>
<text x="695" y="33" font-size="17" letter-spacing="-0.24">AREA 5=(120,191,3,3) LAT=   7.2 LON= 286.6 WEST</text>
<g font-size="10" text-anchor="end"><text x="730" y="44">.1</text><text x="730" y="108">.075</text><text x="730" y="172">.05</text><text x="730" y="236">.025</text><text x="730" y="299">0</text></g>
<g font-size="10"><text x="1156" y="44">10.0</text><text x="1156" y="108">7.5</text><text x="1156" y="172">5.0</text><text x="1156" y="236">2.5</text><text x="1156" y="299">0</text></g>
<g fill="#555"><rect x="1123" y="91.8" width="24" height="135.3"/></g>
<g fill="#fff"><rect x="811" y="195.8" width="24" height="3.3"/><rect x="835" y="157.7" width="24" height="3.3"/><rect x="859" y="126.3" width="24" height="3.3"/><rect x="955" y="171.8" width="24" height="3.3"/><rect x="979" y="280.8" width="24" height="3.3"/><rect x="1075" y="257.3" width="24" height="3.3"/><rect x="1099" y="278.7" width="24" height="3.3"/><rect x="1123" y="156.4" width="24" height="3.3"/></g>
</g>
<g transform="translate(0 730)">
<use href="#cf"/>
<text x="695" y="33" font-size="17" letter-spacing="-0.24">AREA 3=(175,146,3,3) LAT= -24.7 LON= 305.8 WEST</text>
<g font-size="10" text-anchor="end"><text x="730" y="44">.1</text><text x="730" y="108">.075</text><text x="730" y="172">.05</text><text x="730" y="236">.025</text><text x="730" y="299">0</text></g>
<g font-size="10"><text x="1156" y="44">1</text><text x="1156" y="108">.75</text><text x="1156" y="172">.5</text><text x="1156" y="236">.25</text><text x="1156" y="299">0</text></g>
<g fill="#555"><rect x="811" y="183" width="24" height="6"/><rect x="859" y="43" width="24" height="6"/></g>
<g fill="#fff"><rect x="811" y="184.5" width="24" height="3.3"/><rect x="835" y="125.8" width="24" height="3.3"/><rect x="859" y="44.1" width="24" height="3.3"/><rect x="955" y="97.7" width="24" height="3.3"/><rect x="979" y="285.3" width="24" height="3.3"/><rect x="1075" y="259.6" width="24" height="3.3"/><rect x="1099" y="283.1" width="24" height="3.3"/><rect x="1123" y="157.7" width="24" height="3.3"/></g>
</g>
<g transform="translate(531 730)">
<use href="#cf"/>
<text x="695" y="33" font-size="17" letter-spacing="-0.24">AREA 6=(78,78,3,3) LAT=  24.8 LON= 349.1 WEST</text>
<g font-size="10" text-anchor="end"><text x="730" y="44">.2</text><text x="730" y="108">.15</text><text x="730" y="172">.1</text><text x="730" y="236">.05</text><text x="730" y="299">0</text></g>
<g font-size="10"><text x="1156" y="44">2.0</text><text x="1156" y="108">1.5</text><text x="1156" y="172">1.0</text><text x="1156" y="236">0.5</text><text x="1156" y="299">0</text></g>
<g fill="#555"><rect x="811" y="218.3" width="24" height="5"/><rect x="835" y="176.3" width="24" height="7.4"/><rect x="859" y="118.3" width="24" height="10.7"/><rect x="955" y="157" width="24" height="8.7"/><rect x="1075" y="265.5" width="24" height="4"/><rect x="1123" y="95" width="24" height="78.7"/></g>
<g fill="#fff"><rect x="811" y="219.3" width="24" height="3.3"/><rect x="835" y="178" width="24" height="3.3"/><rect x="859" y="121.6" width="24" height="3.3"/><rect x="955" y="159.6" width="24" height="3.3"/><rect x="979" y="287.6" width="24" height="3.3"/><rect x="1075" y="265.6" width="24" height="3.3"/><rect x="1099" y="284.6" width="24" height="3.3"/><rect x="1123" y="132.6" width="24" height="3.3"/></g>
</g>

<!-- ===== Info text ===== -->
<g font-size="16" letter-spacing="1.4">
<text x="648.5" y="1101">GLL/NIMS</text>
<text x="648.5" y="1123">OBSNAME/EXT=29JNGLOBAL02A     TCA=+002 11:15:01         TARGET=JUPITER    SCET=2000 DEC 31 14:12:19</text>
<text x="648.5" y="1145">BEG SCLK=05845111.00.0        NIMSMODE=FIXED MAP        GRATING OFFSET=04 MIN RNG=2327210.00 KM</text>
<text x="648.5" y="1167">END SCLK=05845121.36.0        F(1 u)=2691.30            GAIN STATE=2      MAX RNG=2400510.00 KM</text>
<text x="648.5" y="1189">PROJECTION=PERSPECTIVE PRO    LINE=129   LAT=0.3     INA=30.6     PHA=38.6      EMA=8.1</text>
<text x="648.5" y="1211">SCALE=581.923 KM/PIXEL        SAMP=151   LON=305.3   S/CAZ=0.6    SUNAZ=-170.7  SPEED=0.9*0.029</text>
<text x="648.5" y="1233">OBSNOTE=1 of 6 Jupiter global maps of Jupiter's entire disk</text>
</g>
</svg>
</body></html>
